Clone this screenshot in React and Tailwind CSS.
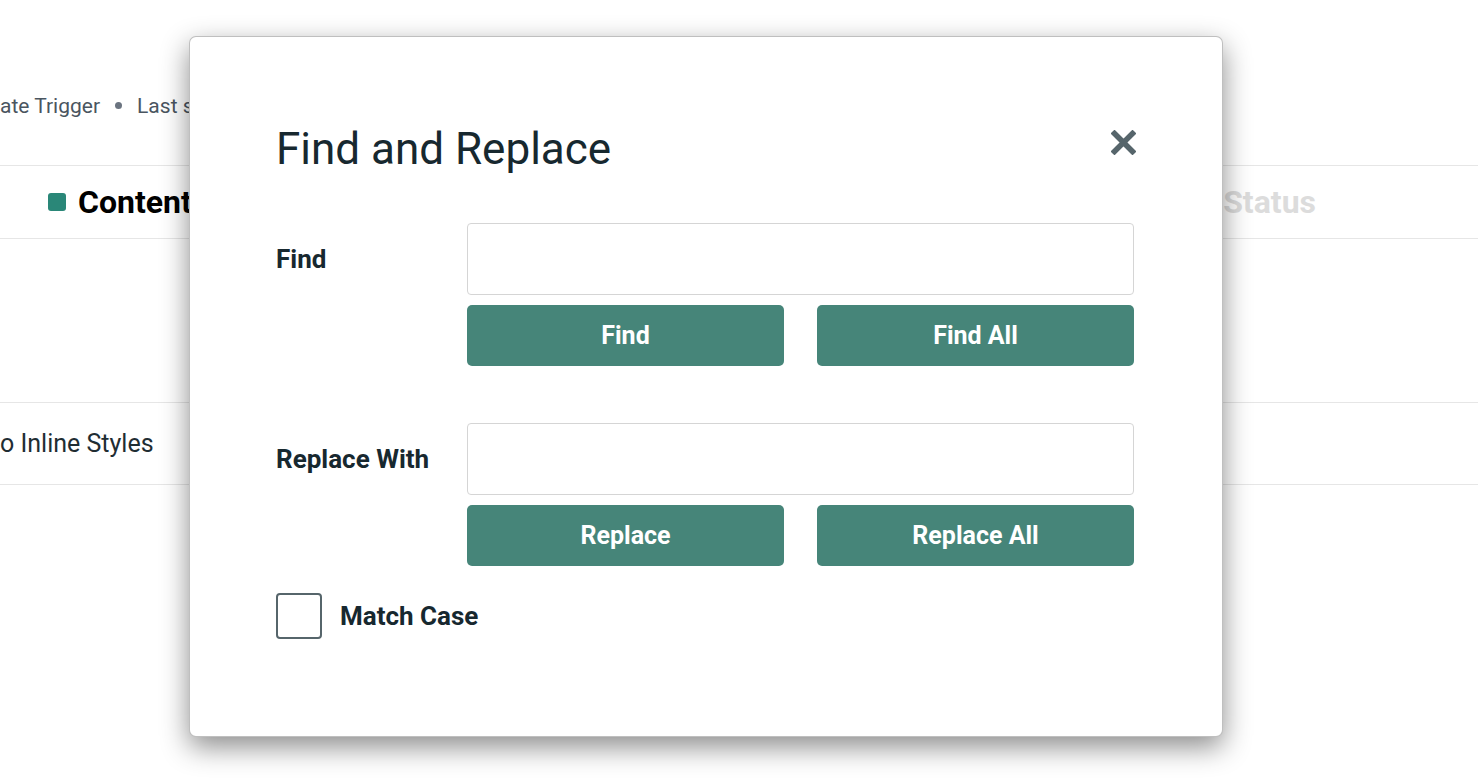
import React, { useState } from 'react';

const FONT = { fontFamily: 'Roboto, "Liberation Sans", sans-serif' };

const ActionButton = ({ children }) => (
    <button className="h-[61px] rounded-[5px] bg-[#468579] text-[25px] font-bold text-white">
        {children}
    </button>
);

const FieldRow = ({ label, buttons, value, onChange }) => (
    <div className="grid grid-cols-[191px_1fr] items-start">
        <div className="flex h-[72px] items-center text-[26px] font-bold text-[#17282f]">{label}</div>
        <div className="flex flex-col gap-[10px]">
            <input
                value={value}
                onChange={(e) => onChange(e.target.value)}
                className="h-[72px] w-full rounded-[4px] border border-[#d5d5d5] px-4 text-[22px] outline-none"
            />
            <div className="grid grid-cols-2 gap-[33px]">
                {buttons.map((b) => (
                    <ActionButton key={b}>{b}</ActionButton>
                ))}
            </div>
        </div>
    </div>
);

const App = () => {
    const [find, setFind] = useState('');
    const [replace, setReplace] = useState('');
    const [matchCase, setMatchCase] = useState(false);

    return (
        <div className="relative h-[780px] w-full overflow-hidden bg-white" style={FONT}>
            {/* page behind the dialog */}
            <div className="flex h-[165px] items-start pt-[91px] text-[21px] text-[#4a5560]">
                <span>ate Trigger</span>
                <span className="mx-[15px] mt-[11px] h-[7px] w-[7px] rounded-full bg-[#6b7480]" />
                <span>Last saved</span>
            </div>
            <div className="flex h-[74px] items-center border-y border-[#e6e6e6] text-[32px] font-bold">
                <div className="flex items-center pl-[48px]">
                    <span className="mr-3 h-[18px] w-[18px] rounded-[3px] bg-[#2a8778]" />
                    <span className="text-black">Content</span>
                </div>
                <span className="ml-auto mr-[162px] text-[#dcdcdc]">Status</span>
            </div>
            <div className="h-[164px] border-b border-[#e6e6e6]" />
            <div className="flex h-[82px] items-center border-b border-[#e6e6e6] text-[25px] text-[#1f2d33]">
                <span>o Inline Styles</span>
            </div>

            {/* dialog */}
            <div className="absolute left-[189px] top-[36px] h-[701px] w-[1034px] rounded-[7px] border border-black/25 bg-white pl-[86px] pr-[88px] pt-[86px] shadow-[0_10px_28px_rgba(0,0,0,0.45)]">
                <div className="flex items-center justify-between">
                    <h2 className="text-[44px] leading-[52px] text-[#17282f]">Find and Replace</h2>
                    <button className="-mt-[14px] -mr-[2px]">
                        <svg width="25" height="25" viewBox="0 0 25 25">
                            <path d="M3.5 3.5 L21.5 21.5 M21.5 3.5 L3.5 21.5" stroke="#56656b" strokeWidth="5.5" strokeLinecap="square" />
                        </svg>
                    </button>
                </div>

                <div className="mt-[48px] flex flex-col gap-[57px]">
                    <FieldRow label="Find" buttons={['Find', 'Find All']} value={find} onChange={setFind} />
                    <FieldRow label="Replace With" buttons={['Replace', 'Replace All']} value={replace} onChange={setReplace} />
                </div>

                <label className="mt-[27px] flex cursor-pointer items-center gap-[18px]">
                    <input
                        type="checkbox"
                        checked={matchCase}
                        onChange={(e) => setMatchCase(e.target.checked)}
                        className="h-[46px] w-[46px] appearance-none rounded-[4px] border-2 border-[#56656b] checked:bg-[#468579]"
                    />
                    <span className="text-[26px] font-bold text-[#17282f]">Match Case</span>
                </label>
            </div>
        </div>
    );
};

export default App;
